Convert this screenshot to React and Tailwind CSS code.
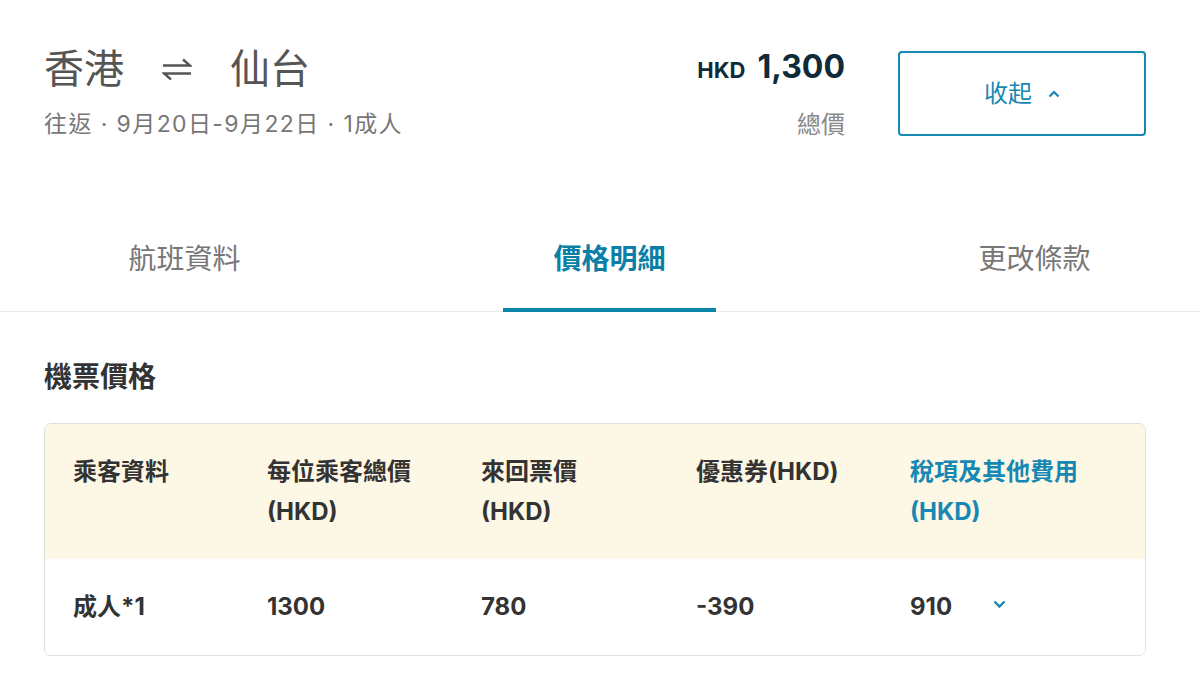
import React from "react";

const font = { fontFamily: 'Inter, "Noto Sans CJK TC", sans-serif' };

function SwapIcon() {
  return (
    <svg width="30" height="22" viewBox="0 0 30 22" className="mx-[38px]">
      <path d="M1 7.5 H28 L21 1.5" fill="none" stroke="#555" strokeWidth="2.4" strokeLinejoin="miter" />
      <path d="M29 15.5 H2 L9 21.5" fill="none" stroke="#555" strokeWidth="2.4" strokeLinejoin="miter" />
    </svg>
  );
}

function ChevronUp() {
  return (
    <svg width="12" height="8" viewBox="0 0 12 8" className="ml-[16px]">
      <path d="M1.5 6.5 L6 2 L10.5 6.5" fill="none" stroke="#1788b3" strokeWidth="2.2" />
    </svg>
  );
}

function ChevronDown() {
  return (
    <svg width="13" height="9" viewBox="0 0 13 9" className="ml-[41px] mt-[-6px]">
      <path d="M1.5 1.5 L6.5 6.5 L11.5 1.5" fill="none" stroke="#1788b3" strokeWidth="2.4" />
    </svg>
  );
}

export default function App() {
  const headers = [
    ["乘客資料", ""],
    ["每位乘客總價", "(HKD)"],
    ["來回票價", "(HKD)"],
    ["優惠券(HKD)", ""],
    ["稅項及其他費用", "(HKD)"],
  ];
  const row = ["成人*1", "1300", "780", "-390", "910"];
  return (
    <div className="w-[1200px] h-[693px] bg-white overflow-hidden" style={font}>
      {/* Header */}
      <div className="flex justify-between pl-[44px] pr-[54px] pt-[45px]">
        <div>
          <div className="flex items-center text-[40px] leading-[48px] text-[#555]">
            <span>香港</span>
            <SwapIcon />
            <span>仙台</span>
          </div>
          <div className="mt-[16px] text-[23px] leading-[30px] tracking-[1.4px] text-[#777] whitespace-nowrap">
            往返&nbsp;·&nbsp;9月20日-9月22日&nbsp;·&nbsp;1成人
          </div>
        </div>
        <div className="flex items-start">
          <div className="flex flex-col items-end mr-[53px]">
            <div className="flex items-baseline font-bold text-[#0e2a3b] leading-[48px] mt-[-2px]">
              <span className="text-[22px] mr-[12px]">HKD</span>
              <span className="text-[32px]">1,300</span>
            </div>
            <div className="mt-[16px] text-[24px] leading-[30px] text-[#888]">總價</div>
          </div>
          <button className="mt-[6px] w-[248px] h-[85px] border-2 border-[#1788b3] rounded-[4px] flex items-center justify-center text-[24px] text-[#1788b3]">
            <span>收起</span>
            <ChevronUp />
          </button>
        </div>
      </div>

      {/* Tabs */}
      <div className="mt-[67px] border-b border-[#ebebeb] flex gap-[212px] pl-[78px]">
        <div className="w-[213px] text-center pt-[32px] pb-[32px] text-[28px] leading-[40px] text-[#777]">
          航班資料
        </div>
        <div className="w-[213px] text-center pt-[32px] pb-[28px] -mb-px border-b-4 border-[#0b86ab] text-[28px] leading-[40px] text-[#0b7fa6] font-bold">
          價格明細
        </div>
        <div className="w-[213px] text-center pt-[32px] pb-[32px] text-[28px] leading-[40px] text-[#777]">
          更改條款
        </div>
      </div>

      {/* Section */}
      <div className="pl-[44px] pr-[54px] pt-[47px]">
        <div className="text-[28px] leading-[36px] font-bold text-[#333]">機票價格</div>
        <div className="mt-[28px] border border-[#dedede] rounded-[7px] overflow-hidden">
          <div className="bg-[#fdf7e6] grid grid-cols-[194px_214px_215px_214px_1fr] pl-[28px] pt-[28px] pb-[27px]">
            {headers.map((h, i) => (
              <div
                key={i}
                className={`text-[24px] leading-[40px] font-bold ${i === 4 ? "text-[#1788b3]" : "text-[#333]"}`}
              >
                <div>{h[0]}</div>
                {h[1] && <div>{h[1]}</div>}
              </div>
            ))}
          </div>
          <div className="bg-white grid grid-cols-[194px_214px_215px_214px_1fr] pl-[28px] py-[28px]">
            {row.map((c, i) => (
              <div key={i} className="flex items-center text-[24px] leading-[40px] font-bold text-[#333]">
                <span>{c}</span>
                {i === 4 && <ChevronDown />}
              </div>
            ))}
          </div>
        </div>
      </div>
    </div>
  );
}
